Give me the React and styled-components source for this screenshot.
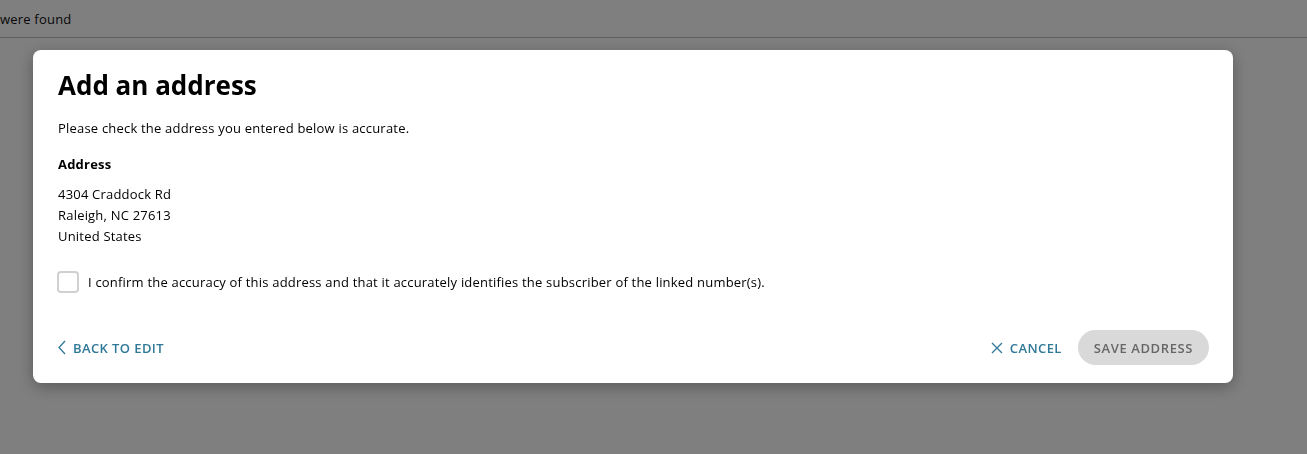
import React from "react";
import styled, { createGlobalStyle } from "styled-components";

const Global = createGlobalStyle`
  html, body { margin: 0; padding: 0; background: #fff; }
  body { font-family: "Open Sans", "Liberation Sans", sans-serif; color: #000; }
  * { box-sizing: border-box; }
`;

const Page = styled.div`
  width: 1307px;
  height: 454px;
  overflow: hidden;
`;

const PageHeader = styled.div`
  height: 38px;
  border-bottom: 1px solid #c0c0c0;
  display: flex;
  align-items: center;
  padding-left: 0;
  font-size: 13px;
  letter-spacing: 0.2px;
  color: #111;
`;

const Overlay = styled.div`
  position: fixed;
  inset: 0;
  background: rgba(0, 0, 0, 0.5);
  padding: 50px 0 0 33px;
`;

const Modal = styled.div`
  width: 1200px;
  background: #fff;
  border-radius: 8px;
  box-shadow: 0 4px 16px rgba(0, 0, 0, 0.3);
  padding: 20px 24px 18px 25px;
`;

const Title = styled.h1`
  margin: 0;
  font-size: 26px;
  line-height: 30px;
  font-weight: 700;
  letter-spacing: 0;
`;

const Text = styled.p`
  margin: ${(p) => p.$mt || 0}px 0 0;
  font-size: 13px;
  line-height: 21px;
  letter-spacing: 0.2px;
  font-weight: ${(p) => (p.$bold ? 700 : 400)};
`;

const CheckRow = styled.label`
  display: flex;
  align-items: center;
  gap: 9px;
  margin-top: 24px;
  font-size: 13px;
  letter-spacing: 0.2px;
  cursor: pointer;
`;

const Box = styled.span`
  width: 22px;
  height: 22px;
  border: 2px solid #d0d0d0;
  border-radius: 4px;
  flex: none;
  margin-left: -1px;
`;

const Footer = styled.div`
  display: flex;
  align-items: center;
  justify-content: space-between;
  margin-top: 37px;
`;

const LinkButton = styled.button`
  display: flex;
  align-items: center;
  gap: 7px;
  background: none;
  border: none;
  padding: 0;
  color: #2f7898;
  font-family: inherit;
  font-size: 13px;
  font-weight: 600;
  letter-spacing: 0.4px;
  text-transform: uppercase;
  cursor: pointer;
`;

const Right = styled.div`
  display: flex;
  align-items: center;
  gap: 16px;
`;

const Pill = styled.button`
  height: 35px;
  padding: 0 16px;
  border: none;
  border-radius: 18px;
  background: #d9d9d9;
  color: #666;
  font-family: inherit;
  font-size: 13px;
  font-weight: 600;
  letter-spacing: 0.6px;
  text-transform: uppercase;
`;

export default function App() {
  return (
    <Page>
      <Global />
      <PageHeader>were found</PageHeader>
      <Overlay>
        <Modal>
          <Title>Add an address</Title>
          <Text $mt={18}>Please check the address you entered below is accurate.</Text>
          <Text $mt={15} $bold>Address</Text>
          <Text $mt={9}>
            4304 Craddock Rd
            <br />
            Raleigh, NC 27613
            <br />
            United States
          </Text>
          <CheckRow>
            <Box />
            I confirm the accuracy of this address and that it accurately identifies the subscriber of the linked number(s).
          </CheckRow>
          <Footer>
            <LinkButton>
              <svg width="8" height="15" viewBox="0 0 8 15" fill="none" stroke="currentColor" strokeWidth="1.3">
                <path d="M7 1 L1 7.5 L7 14" />
              </svg>
              Back to edit
            </LinkButton>
            <Right>
              <LinkButton>
                <svg width="12" height="12" viewBox="0 0 12 12" fill="none" stroke="currentColor" strokeWidth="1.3">
                  <path d="M1 1 L11 11 M11 1 L1 11" />
                </svg>
                Cancel
              </LinkButton>
              <Pill disabled>Save address</Pill>
            </Right>
          </Footer>
        </Modal>
      </Overlay>
    </Page>
  );
}
